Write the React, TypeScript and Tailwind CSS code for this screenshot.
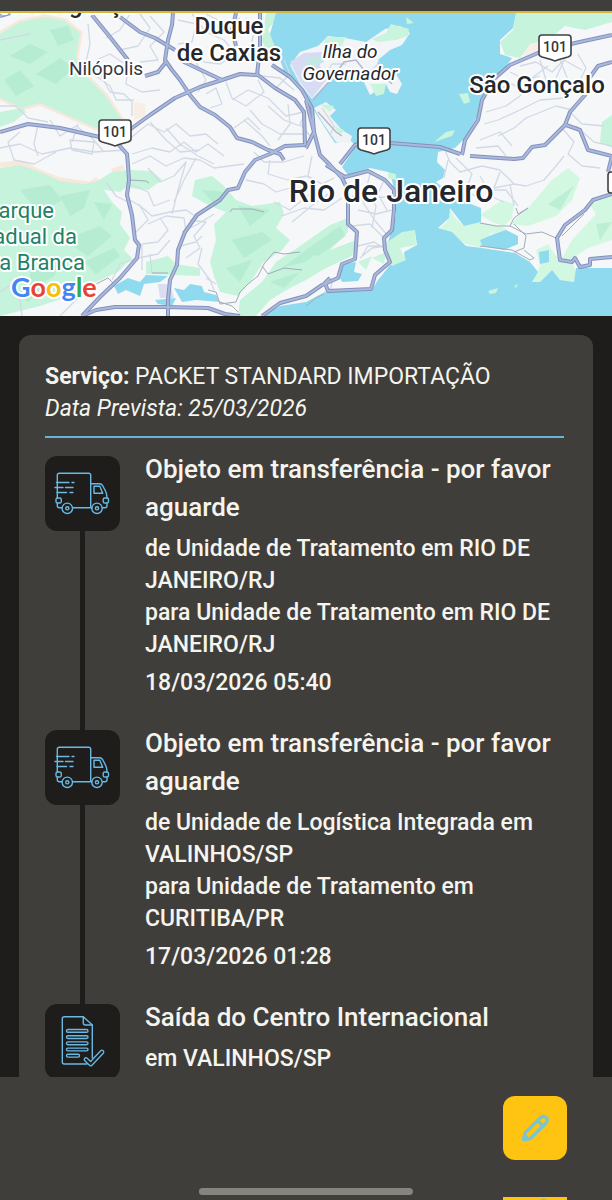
import type { ReactNode } from "react";

const parks = [
  "M0 34L20 22L45 17L65 21L80 33L76 58L86 76L106 96L123 122L116 131L96 128L60 112L40 103L22 108L0 98Z",
  "M0 112L22 108L26 112L14 122L0 127Z",
  "M0 168L20 165L40 172L60 181L85 184L96 182L112 172L127 170L130 184L120 192L104 190L112 202L122 212L120 224L130 238L124 250L132 258L118 272L96 282L70 296L40 306L0 316Z",
  "M130 170L152 171L162 180L148 190L130 188Z",
  "M195 180L212 176L224 186L236 200L252 206L280 202L284 214L276 228L290 240L282 250L262 264L252 280L238 296L220 292L214 276L210 262L216 240L214 224L226 212L210 206L192 196Z",
  "M146 262L168 256L176 264L200 268L200 276L146 274Z",
  "M240 300L262 282L276 262L300 246L330 225L348 218L348 232L330 250L356 240L352 256L326 268L306 280L290 288L270 300L256 316L238 316Z",
  "M280 13L268 30L276 44L268 58L262 40L266 13Z",
  "M516 13L580 13L612 13L612 22L585 30L565 26L548 40L530 44L520 58L505 55L500 42L513 30Z",
  "M602 122L612 115L612 148L600 142Z",
  "M552 180L568 168L580 178L572 200L556 216L528 226L510 224L528 208L540 194Z",
  "M480 215L502 200L514 204L512 218L504 226L492 222Z",
  "M590 204L612 196L612 225L598 218Z",
  "M596 214L612 220L612 240L588 248L570 260L562 258L572 240Z",
  "M440 228L447 222L449 208L455 218L464 226L480 222L500 226L508 230L490 234L482 248L466 244L454 236Z",
  "M536 250L548 244L556 256L572 262L576 272L574 282L560 280L552 270L540 282L532 282L540 266Z",
];

const shades = [
  "M10 56L30 44L48 52L30 64Z M36 74L60 58L74 68L56 84Z M4 80L20 70L34 86L16 96Z M50 30L68 26L74 40L58 46Z",
  "M20 190L50 185L62 200L40 214Z M60 196L90 190L84 208L70 216Z M64 240L100 226L112 236L88 256Z M30 270L62 258L54 276L30 290Z M84 262L114 248L120 256L96 274Z M12 292L44 286L28 302Z M94 202L112 204L104 220Z",
  "M202 190L224 192L216 206Z M238 206L270 210L250 226Z M232 240L262 232L272 240L244 258Z M226 268L252 260L240 282Z M282 268L320 240L342 230L330 246L304 262Z M306 250L340 226L346 236L318 256Z M270 282L300 272L284 288Z",
  "M548 204L574 186L560 210Z M596 224L612 222L600 240Z",
];

const lakes = [
  "M114 286L128 278L140 282L146 275L168 276L160 282L144 284L140 296L126 290L118 294Z",
  "M174 288L184 290L190 284L202 286L204 292L216 295L220 302L196 300L182 302Z",
  "M155 300L176 298L172 306L158 304Z",
  "M342 264L356 262L354 272L362 274L358 281L342 282L338 274Z",
  "M480 240L494 234L506 230L518 236L518 244L504 250L482 246Z",
  "M539 252L549 250L549 262L540 264Z",
];

const streets = [
  "M0 40L30 34M88 24L90 44L86 62L98 70L110 92L124 94L132 102L132 116M96 60L110 54L128 66L126 84L142 92L160 90",
  "M96 76L110 86L116 100L134 100M130 14L120 30L106 38M140 14L150 28L138 46L120 50M150 16L164 32L150 46L158 60L140 62",
  "M178 20L196 24L192 42L178 44M192 14L206 32L224 40L236 54L220 64L204 62L196 46M206 14L226 24L240 18M246 18L254 32L248 60",
  "M180 58L196 62L206 80L198 92M226 82L232 98L246 106L264 92L258 80M206 94L216 88L222 104L210 108M232 100L248 90L268 98L286 116L304 112M276 88L290 74L284 60M262 76L280 78L294 90",
  "M0 148L20 144L42 154L70 148L94 152L126 150M38 124L34 144L38 156M50 120L60 136L76 126L92 138L104 152M70 140L94 142L92 154L72 150ZM78 124L72 142M20 132L8 142L14 160L34 164L56 152",
  "M0 106L16 106L28 118L48 122M128 140L148 124L164 132L176 124L190 136L206 134L218 144M132 154L152 148L170 152L184 142L196 152L208 144L224 156M150 122L166 140L180 152L200 150M166 128L180 144L198 156L214 164",
  "M132 164L150 156L166 166L184 158L200 160L214 168L244 164M148 168L160 182L174 176L186 162L178 190L172 214M196 158L184 180L174 202M130 184L148 192L154 206L170 200M106 182L116 196L128 202M130 200L140 206L148 220L136 232M138 204L152 216L170 212L186 210L198 218",
  "M148 224L166 216L184 218L186 232M142 244L158 242L168 230L160 218M142 244L142 270M182 232L198 224L214 214M190 220L206 222L194 236L200 248L186 258M180 246L196 242L202 236M202 248L198 264L210 280L214 290",
  "M112 280L120 264L138 258L158 254L170 240M150 254L152 274M206 278L216 284M0 292L12 284L20 300L22 316M60 316L76 300L84 294",
  "M268 106L284 120L300 126M250 110L262 124L280 134L304 134M244 120L262 136L270 146M234 128L248 118L260 130M288 104L290 124L278 140M254 152L264 162L284 162L304 156M270 160L268 174L288 180L306 176L326 186M246 180L264 184L276 192L290 188M274 202L290 210L310 194L332 198M282 216L304 208L324 210L342 198M292 222L314 204L328 194M312 156L308 176L322 184L334 178",
  "M356 182L364 204L376 222L388 236M352 196L374 198L394 196M358 210L376 214L392 210M370 174L366 190L376 206L372 228M384 180L378 194L388 212M352 226L370 224L384 238M360 258L372 248L386 246L368 246L362 256M358 246L374 242L384 248M332 282L330 292",
  "M486 112L506 106L520 96L532 78L548 66M496 90L512 84L528 94L550 86L566 90L584 82M510 72L526 80L540 76M520 66L536 62L552 72L564 60L582 70M484 124L498 120L520 110L540 100L564 98M498 136L514 128L526 118L556 106L572 110M480 140L500 132L512 146M476 148L498 146L506 156M560 60L568 80L576 92M578 54L586 68L580 80M540 60L546 80L562 84M566 56L556 78",
  "M444 148L450 162L460 172L482 166L500 170L514 184L526 186L544 180L556 166L564 156M456 158L472 174L466 190L478 198M448 160L444 178M480 176L488 190L506 190L518 206M500 172L494 188L514 184M562 128L574 142L568 154L582 166L600 168M570 112L582 124L604 126M576 126L594 142L612 146M514 206L510 184M490 196L504 202",
  "M322 108L334 126L330 136M306 112L300 124L312 138L306 150M316 66L324 76L332 64L346 64M368 74L378 64L388 76",
];

const greyRoads = [
  "M208 290L216 292L220 304L236 302L240 292L248 284L258 276L264 264L274 252L284 254L300 252M220 302L232 306L238 312M262 266L268 274L284 268L302 270M230 212L232 209L252 209L264 212",
  "M480 223L496 226L510 226L526 234L542 232L556 238M510 226L514 218L528 208M514 224L526 236L524 248L514 252M480 246L512 250L530 260L534 258L524 250M562 236L574 224L584 214M516 208L518 214L528 208",
  "M96 284L108 278L114 284M130 180L146 181L149 183M152 273L168 273M306 306L316 298L324 294",
];

const highways = [
  "M0 132L28 124L60 128L104 138M128 131L150 115L175 98L200 87L222 80L240 74L258 75L275 88L295 100L304 112L305 145",
  "M92 15L110 37L128 60M120 17L140 32L155 38L175 50M145 76L158 72L166 62",
  "M173 13L172 25L168 40L165 60L172 70L180 80L190 95L200 107L215 115L230 127L237 138L252 142L268 150L280 154L284 160",
  "M180 60L205 72L222 80M236 13L232 30L236 46M260 13L260 48L257 75M0 16L10 13",
  "M118 144L127 154L128 165L129 180L127 195L132 215L135 240L139 245L137 258L120 278L100 297L82 316",
  "M305 145L285 146L270 154L255 160L245 172L238 188L228 190L220 200L197 215L185 232L178 250L177 265L170 280L168 300L168 316",
  "M82 316L96 310L115 307L165 307L208 308L225 314L240 316M262 316L280 303L306 296L322 285L338 278L342 264L355 259L357 232L348 224L348 190L342 178L330 165L320 155L314 132L306 100",
  "M272 65L290 77L302 90L312 108L314 132L306 148M326 165L345 177L368 171L385 180L394 190L394 210L392 230L384 238L385 250L390 262L375 275L371 289L328 291L325 283L330 278",
  "M340 164L355 145L374 139L390 143L440 147L460 154M462 155L465 140L478 120L482 100L495 78L510 65L538 53L575 43L612 35",
  "M612 62L598 66L588 80L585 95L570 112L565 125L545 145L532 147L523 158L514 159L470 156M566 125L580 130L588 150L612 156L608 172",
  "M612 194L593 200L585 210L565 225L557 238L560 260L572 262L575 258L580 267L590 265L590 259L612 257",
];

const bay =
  "M276 13L516 13L513 28L500 40L500 54L512 58L500 75L483 95L478 115L465 138L455 148L438 152L437 162L445 170L443 178L436 182L456 198L481 208L481 222L464 226L450 208L449 218L438 228L452 232L466 246L482 248L515 253L530 262L538 272L532 282L540 282L552 270L560 280L574 282L576 268L612 268L612 316L262 316L280 306L306 302L325 292L371 291L378 280L390 265L405 260L404 252L417 245L415 232L402 233L392 244L388 242L396 215L396 200L392 180L388 172L370 168L348 175L342 167L356 146L350 140L335 143L325 128L315 112L300 86L285 74L280 60L270 34Z";

function Shield({ x, y }: { x: number; y: number }) {
  return (
    <g transform={`translate(${x} ${y})`}>
      <path
        d="M-13 -12H13Q16 -12 16 -9V7Q16 9 13 10L4 12.5L0 14L-4 12.5L-13 10Q-16 9 -16 7V-9Q-16 -12 -13 -12Z"
        fill="#fff"
        stroke="#404145"
        strokeWidth="1.6"
      />
      <text y="5" textAnchor="middle" className="fill-[#333438] text-[14px] font-medium">
        101
      </text>
    </g>
  );
}

function Label({
  x,
  y,
  className,
  anchor = "middle",
  children,
}: {
  x: number;
  y: number;
  className: string;
  anchor?: "start" | "middle" | "end";
  children: ReactNode;
}) {
  return (
    <text
      x={x}
      y={y}
      textAnchor={anchor}
      stroke="#fff"
      strokeWidth="4"
      strokeLinejoin="round"
      paintOrder="stroke"
      className={className}
    >
      {children}
    </text>
  );
}

function TrackingMap() {
  return (
    <svg
      viewBox="0 13 612 303"
      preserveAspectRatio="xMidYMid slice"
      className="block w-full"
      role="img"
      aria-label="Mapa do Rio de Janeiro"
    >
      <rect y="13" width="612" height="303" fill="#f6f7f9" />
      <g fill="none" stroke="#f8e8dc" strokeWidth="5" strokeLinejoin="round">
        <path d={parks[0]} />
        <path d="M0 165L20 163L42 173L60 180L90 184L98 179M112 171L124 167" />
      </g>
      <path d="M134 102L145 104L146 116L134 120ZM520 44L548 38L556 46L524 56Z" fill="#f7eee6" />
      {parks.slice(0, 10).map((d) => (
        <path key={d} d={d} fill="#c6f3dc" />
      ))}
      {parks.slice(10).map((d) => (
        <path key={d} d={d} fill="#d3f8e2" />
      ))}
      {shades.map((d) => (
        <path key={d} d={d} fill="#a6e6c7" opacity="0.5" />
      ))}
      <path d="M158 284L170 284L174 298L160 298Z" fill="#dcdcf3" />
      <path d={bay} fill="#8fdaee" />
      {lakes.map((d) => (
        <path key={d} d={d} fill="#8fdaee" />
      ))}
      <path
        d="M300 52L318 46L328 36L345 38L366 42L385 29L400 26L410 33L402 45L390 50L378 60L384 70L396 74L402 84L397 94L390 92L386 84L370 95L362 78L340 74L326 84L312 99L300 84L290 65Z"
        fill="#f3f4f8"
      />
      <path
        d="M326 37L346 37L342 46L322 50ZM372 39L386 33L391 24L409 29L408 36L396 40L378 42ZM406 17L414 23L407 24ZM370 84L386 84L384 94L376 96ZM459 94L468 93L470 102L464 104ZM446 132L455 130L452 136L434 142Z"
        fill="#c9f4dd"
      />
      <path d="M290 62L304 53L322 52L320 66L328 78L312 98L300 82Z" fill="#d7dcf4" />
      <path d="M306 58L322 56L324 62L310 68Z" fill="#c3e9e2" />
      <path
        d="M314 108L326 102L336 110L330 116L342 130L352 136L350 143L336 142L322 122Z"
        fill="#f1f2f3"
      />
      <path d="M320 104L334 106L330 112ZM334 126L344 130L340 136Z" fill="#c9f4dd" />
      <path
        d="M386 243L402 232L415 230L416 245L400 248L406 260L392 266L388 254ZM488 291L498 288L496 293L490 294ZM514 286L518 284L516 288ZM388 172L396 174L396 180L388 178ZM358 262L372 256L366 270ZM372 258L386 252L384 264Z"
        fill="#c9f4dd"
      />
      <g fill="none" stroke="#d2d9e6" strokeWidth="1.3" strokeLinejoin="round">
        {streets.map((d) => (
          <path key={d} d={d} />
        ))}
      </g>
      <g fill="none" stroke="#a3abb8" strokeWidth="1" strokeLinejoin="round">
        {greyRoads.map((d) => (
          <path key={d} d={d} />
        ))}
      </g>
      <path
        d="M318 112L336 132L342 136M313 100L334 76L344 62L356 60L364 70M378 62L384 76L392 84"
        fill="none"
        stroke="#b3bad0"
        strokeWidth="1.5"
      />
      <g fill="none" stroke="#8491bd" strokeWidth="4" strokeLinejoin="round">
        {highways.map((d) => (
          <path key={d} d={d} />
        ))}
      </g>
      <g fill="none" stroke="#a9b9dc" strokeWidth="2" strokeLinejoin="round">
        {highways.map((d) => (
          <path key={d} d={d} />
        ))}
      </g>
      <Shield x={115} y={132} />
      <Shield x={374} y={140} />
      <Shield x={555} y={47} />
      <rect x="608" y="172" width="20" height="21" rx="3" fill="#fff" stroke="#404145" strokeWidth="1.6" />
      <Label x={68} y={13} className="fill-[#25272b] text-[24px] font-medium">Nova Iguaçu</Label>
      <Label x={229} y={34} className="fill-[#25272b] text-[24px] font-medium">Duque</Label>
      <Label x={229} y={61} className="fill-[#25272b] text-[24px] font-medium">de Caxias</Label>
      <Label x={106} y={75} className="fill-[#33363b] text-[19px]">Nilópolis</Label>
      <Label x={350} y={58} className="fill-[#25272b] text-[19px] italic">Ilha do</Label>
      <Label x={350} y={80} className="fill-[#25272b] text-[19px] italic">Governador</Label>
      <Label x={537} y={93} className="fill-[#25272b] text-[24px] font-medium">São Gonçalo</Label>
      <Label x={391} y={202} className="fill-[#25272b] text-[32px] font-medium">Rio de Janeiro</Label>
      <Label x={54} y={218} anchor="end" className="fill-[#218268] text-[22px]">Parque</Label>
      <Label x={77} y={244} anchor="end" className="fill-[#218268] text-[22px]">Estadual da</Label>
      <Label x={85} y={270} anchor="end" className="fill-[#218268] text-[22px]">Pedra Branca</Label>
      <Label x={11} y={297} anchor="start" className="font-[Lato] text-[27px] font-bold">
        <tspan fill="#4285f4">G</tspan>
        <tspan fill="#ea4335">o</tspan>
        <tspan fill="#fbbc05">o</tspan>
        <tspan fill="#4285f4">g</tspan>
        <tspan fill="#34a853">l</tspan>
        <tspan fill="#ea4335">e</tspan>
      </Label>
    </svg>
  );
}

function TruckIcon() {
  return (
    <svg
      viewBox="0 0 75 75"
      className="size-full"
      fill="none"
      stroke="#69b9e3"
      strokeWidth="1.4"
      strokeLinecap="round"
      strokeLinejoin="round"
      aria-hidden="true"
    >
      <path d="M12.3 42V19.3Q12.3 17.3 14.3 17.3H43.7Q45.7 17.3 45.7 19.3V51.7M27.5 51.7H47M12.3 47V49.7Q12.3 51.7 14.3 51.7H17" />
      <path d="M45.7 27.7H54.5Q56.5 27.7 57.7 29.7L60.7 35.5Q62 38 62 42M62 47V49.7Q62 51.7 60 51.7H57.5" />
      <path d="M49 30.3H54.8L57.7 37.3H49Z" />
      <rect x="11" y="42" width="5.3" height="5" rx="1.6" />
      <rect x="58.2" y="42" width="5.3" height="5" rx="1.6" />
      <circle cx="22.3" cy="52.3" r="5.2" />
      <circle cx="22.3" cy="52.3" r="1.6" />
      <circle cx="52" cy="52.3" r="5.2" />
      <circle cx="52" cy="52.3" r="1.6" />
      <path d="M11.5 26.5H24M27 26.5H29M10 31.5H18M20.5 31.5H28M12 36.5H21.5M25 36.5H28" />
    </svg>
  );
}

function DocumentIcon() {
  return (
    <svg
      viewBox="0 0 75 75"
      className="size-full"
      fill="none"
      stroke="#69b9e3"
      strokeWidth="1.4"
      strokeLinecap="round"
      strokeLinejoin="round"
      aria-hidden="true"
    >
      <path d="M47.3 54V21L38.3 12.7H19.3Q17.3 12.7 17.3 14.7V58Q17.3 60 19.3 60H42" />
      <path d="M38.3 12.7V19Q38.3 21 40.3 21H47.3" />
      {[25.5, 31.7, 37.9, 44.1].map((y) => (
        <rect key={y} x="21.5" y={y} width="21.5" height="2.8" rx="1.4" />
      ))}
      <rect x="21.5" y="50.3" width="13" height="2.8" rx="1.4" />
      <path d="M41 55.5L45.7 60L57 48" strokeWidth="4.8" />
      <path d="M41 55.5L45.7 60L57 48" stroke="#1e1d1c" strokeWidth="2.2" />
    </svg>
  );
}

function PencilIcon() {
  return (
    <svg
      viewBox="0 0 30 30"
      className="size-[30px]"
      fill="none"
      stroke="#79c4d3"
      strokeWidth="3.2"
      strokeLinejoin="round"
      aria-hidden="true"
    >
      <path d="M3.5 26.5L5 20L20.5 4.5Q23.5 2 26 4.5Q28.5 7 26 10L10.5 25.5Z" />
      <path d="M17.5 7.5L23 13" />
      <path d="M3.5 26.5L4.5 22.5L8 26Z" fill="#79c4d3" />
    </svg>
  );
}

interface TrackingEvent {
  title: string;
  details: string[];
  date?: string;
  icon: "truck" | "document";
}

const events: TrackingEvent[] = [
  {
    title: "Objeto em transferência - por favor aguarde",
    details: [
      "de Unidade de Tratamento em RIO DE JANEIRO/RJ",
      "para Unidade de Tratamento em RIO DE JANEIRO/RJ",
    ],
    date: "18/03/2026 05:40",
    icon: "truck",
  },
  {
    title: "Objeto em transferência - por favor aguarde",
    details: [
      "de Unidade de Logística Integrada em VALINHOS/SP",
      "para Unidade de Tratamento em CURITIBA/PR",
    ],
    date: "17/03/2026 01:28",
    icon: "truck",
  },
  {
    title: "Saída do Centro Internacional",
    details: ["em VALINHOS/SP"],
    icon: "document",
  },
];

function EventRow({ event, last }: { event: TrackingEvent; last: boolean }) {
  return (
    <li className="flex gap-[25px]">
      <div className={`flex shrink-0 flex-col items-center pt-1.5 ${last ? "" : "-mb-1.5"}`}>
        <div className="size-[75px] shrink-0 rounded-xl bg-[#1e1d1c]">
          {event.icon === "truck" ? <TruckIcon /> : <DocumentIcon />}
        </div>
        {!last && <div className="w-[5px] grow bg-[#1e1d1c]" />}
      </div>
      <div className={`min-w-0 flex-1 ${last ? "" : "pb-[25px]"}`}>
        <h2 className="text-[26px] leading-[38px] font-medium">{event.title}</h2>
        <div className="mt-[7px] text-[23px] leading-8 font-medium">
          {event.details.map((line) => (
            <p key={line}>{line}</p>
          ))}
        </div>
        {event.date && <p className="mt-1.5 text-[23px] leading-8 font-medium">{event.date}</p>}
      </div>
    </li>
  );
}

export default function App() {
  return (
    <div className="flex h-screen flex-col overflow-hidden bg-[#1e1d1c] font-[Roboto,sans-serif] text-[#f5f4ef]">
      <header className="h-[13px] shrink-0 border-b-2 border-[#d3b63d] bg-[#403e3a]" />
      <main className="min-h-0 flex-1 overflow-hidden">
        <TrackingMap />
        <section className="mx-[19px] mt-[19px] rounded-t-xl bg-[#403e3a] px-[26px] pt-[26px]">
          <div className="mr-[3px] border-b-2 border-[#69b3d9] pb-[11px] text-[23px] leading-8">
            <p>
              <strong className="font-bold">Serviço:</strong> PACKET STANDARD IMPORTAÇÃO
            </p>
            <p className="italic">Data Prevista: 25/03/2026</p>
          </div>
          <ol className="pt-3">
            {events.map((event, index) => (
              <EventRow key={index} event={event} last={index === events.length - 1} />
            ))}
          </ol>
        </section>
      </main>
      <footer className="relative flex h-[123px] shrink-0 flex-col items-end gap-[37px] overflow-hidden bg-[#403e3a] pt-[19px] pr-[45px]">
        <button
          type="button"
          aria-label="Editar"
          className="flex size-16 shrink-0 items-center justify-center rounded-xl bg-[#ffc411]"
        >
          <PencilIcon />
        </button>
        <button
          type="button"
          aria-label="Editar outro objeto"
          className="flex size-16 shrink-0 items-start justify-center bg-[#ffc411]"
        >
          <PencilIcon />
        </button>
        <div className="absolute bottom-[5px] left-1/2 h-[7px] w-[35%] -translate-x-1/2 rounded-full bg-[#858580]" />
      </footer>
    </div>
  );
}
